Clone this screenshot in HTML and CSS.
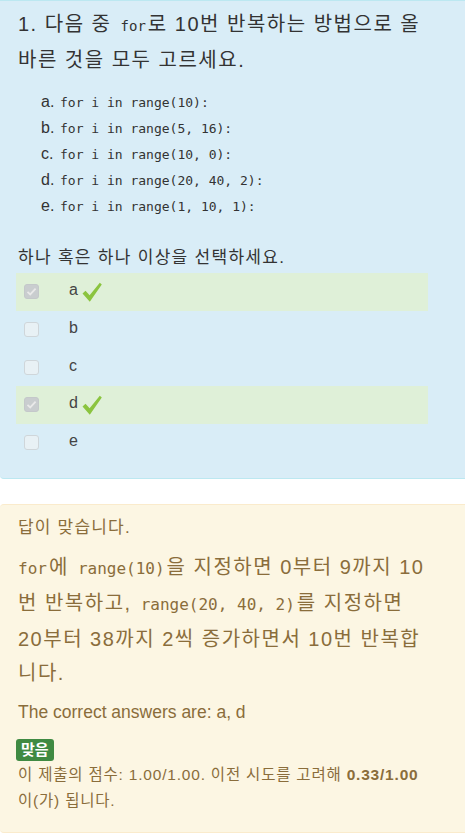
FILE: index.html
```html
<!DOCTYPE html>
<html lang="ko">
<head>
<meta charset="utf-8">
<link rel="stylesheet" href="styles.css">
</head>
<body>
<div class="formulation">
  <div class="qtext">
    <p class="title">1. 다음 중 <code>for</code>로 10번 반복하는 방법으로 올바른 것을 모두 고르세요.</p>
    <ol class="opts">
      <li><span class="lbl">a.</span><code>for i in range(10):</code></li>
      <li><span class="lbl">b.</span><code>for i in range(5, 16):</code></li>
      <li><span class="lbl">c.</span><code>for i in range(10, 0):</code></li>
      <li><span class="lbl">d.</span><code>for i in range(20, 40, 2):</code></li>
      <li><span class="lbl">e.</span><code>for i in range(1, 10, 1):</code></li>
    </ol>
  </div>
  <div class="prompt">하나 혹은 하나 이상을 선택하세요.</div>
  <div class="answers">
    <div class="row correct"><span class="cb checked"><svg viewBox="0 0 15 15" width="15" height="15"><path d="M3.5 7.8 L6.2 10.4 L11.6 4.6" fill="none" stroke="#e9e9e9" stroke-width="1.8"/></svg></span><span class="ans">a</span><svg class="tick" viewBox="0 0 20 22" width="20" height="22"><path d="M0.5 12.5 L3.5 9.8 L7.6 14.2 L17.8 1.8 L19.8 3.6 L7.8 20.8 Z" fill="#8bc43f"/></svg></div>
    <div class="row"><span class="cb"></span><span class="ans">b</span></div>
    <div class="row"><span class="cb"></span><span class="ans">c</span></div>
    <div class="row correct"><span class="cb checked"><svg viewBox="0 0 15 15" width="15" height="15"><path d="M3.5 7.8 L6.2 10.4 L11.6 4.6" fill="none" stroke="#e9e9e9" stroke-width="1.8"/></svg></span><span class="ans">d</span><svg class="tick" viewBox="0 0 20 22" width="20" height="22"><path d="M0.5 12.5 L3.5 9.8 L7.6 14.2 L17.8 1.8 L19.8 3.6 L7.8 20.8 Z" fill="#8bc43f"/></svg></div>
    <div class="row"><span class="cb"></span><span class="ans">e</span></div>
  </div>
</div>
<div class="outcome">
  <div class="fb-short">답이 맞습니다.</div>
  <p class="fb-general"><code>for</code>에 <code>range(10)</code>을 지정하면 0부터 9까지 10번 반복하고, <code>range(20, 40, 2)</code>를 지정하면 20부터 38까지 2씩 증가하면서 10번 반복합니다.</p>
  <div class="rightanswer">The correct answers are: a, d</div>
  <div class="grade"><span class="badge">맞음</span></div>
  <div class="score">이 제출의 점수: 1.00/1.00. 이전 시도를 고려해 <b>0.33/1.00</b> 이(가) 됩니다.</div>
</div>
</body>
</html>
```
FILE: styles.css
```css
html, body {
  margin: 0;
  padding: 0;
  background: #fff;
}
body {
  font-family: "Liberation Sans", "Noto Sans CJK KR", sans-serif;
  color: #333;
  width: 465px;
  overflow: hidden;
}
code {
  font-family: "DejaVu Sans Mono", "Liberation Mono", monospace;
  letter-spacing: 0;
}
.formulation {
  background: #d9edf7;
  border: 1px solid #bce8f1;
  border-right: none;
  border-left: none;
  border-radius: 0 0 0 4px;
  padding: 0 0 10px 16px;
  height: 467px;
  box-sizing: content-box;
}
.title {
  margin: 0;
  padding: 6px 25px 0 2px;
  font-size: 20px;
  line-height: 34px;
  letter-spacing: 1.5px;
}
.title code {
  font-size: 14px;
  padding: 0 2px;
}
.opts {
  list-style: none;
  margin: 12px 0 0;
  padding: 0 0 0 25px;
}
.opts li {
  height: 26px;
  line-height: 26px;
  font-size: 16px;
}
.opts .lbl {
  display: inline-block;
  width: 19px;
}
.opts code {
  font-size: 13px;
}
.prompt {
  margin: 27px 0 0 2px;
  font-size: 17px;
  letter-spacing: 1.3px;
  line-height: 24px;
}
.answers {
  margin-top: 3px;
  width: 412px;
}
.row {
  display: flex;
  align-items: center;
  height: 37.7px;
  padding-left: 8px;
  font-size: 16px;
}
.row.correct {
  background: #dff0d8;
}
.cb {
  width: 13px;
  height: 13px;
  border: 1px solid #cfd6da;
  border-radius: 3px;
  background: #e8f1f5;
  flex: none;
  position: relative;
}
.cb.checked {
  background: #c9cdcf;
  border-color: #c4c8ca;
}
.cb svg {
  position: absolute;
  left: -1px;
  top: -1px;
}
.ans {
  margin-left: 30px;
  color: #444;
  margin-top: -3px;
}
.tick {
  margin-left: 4px;
}
.outcome {
  margin-top: 25px;
  background: #fcf6e3;
  border: 1px solid #faebcc;
  border-right: none;
  border-left: none;
  border-radius: 4px 0 0 4px;
  padding: 10px 36px 20px 18px;
  color: #8a6d3b;
  height: 297px;
  box-sizing: content-box;
}
.fb-short {
  font-size: 17px;
  letter-spacing: 1.2px;
  line-height: 26px;
}
.fb-general {
  margin: 9px 0 0;
  font-size: 20px;
  line-height: 34px;
  letter-spacing: 1.5px;
}
.fb-general code {
  font-size: 16px;
  padding: 0 2px;
}
.fb-general code:first-child {
  padding-left: 0;
}
.rightanswer {
  margin-top: 10px;
  font-size: 17.5px;
  line-height: 24px;
}
.grade {
  margin-top: 15px;
  line-height: 0;
}
.badge {
  display: inline-block;
  background: #3f8a42;
  color: #fff;
  font-weight: bold;
  font-size: 15px;
  line-height: 22px;
  padding: 0 5px;
  border-radius: 3px;
  margin-left: -2px;
}
.score {
  margin-top: 1px;
  font-size: 15.5px;
  letter-spacing: 0.8px;
  line-height: 26px;
}
```
